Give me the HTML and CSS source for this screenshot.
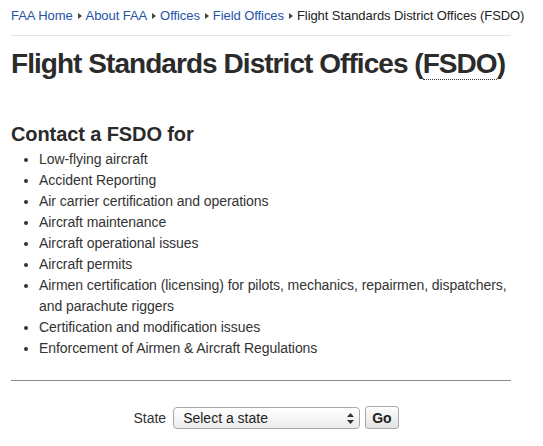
FILE: index.html
```html
<!DOCTYPE html>
<html>
<head>
<meta charset="utf-8">
<link rel="stylesheet" href="styles.css">
</head>
<body>
<div class="page">
  <nav class="crumbs">
    <a href="#">FAA Home</a><span class="sep"></span><a href="#">About FAA</a><span class="sep"></span><a href="#">Offices</a><span class="sep"></span><a href="#">Field Offices</a><span class="sep"></span><span class="current">Flight Standards District Offices (FSDO)</span>
  </nav>
  <h1 class="title">Flight Standards District Offices (<abbr class="abbr" title="Flight Standards District Office">FSDO</abbr>)</h1>
  <h2 class="subtitle">Contact a FSDO for</h2>
  <ul class="list">
    <li>Low-flying aircraft</li>
    <li>Accident Reporting</li>
    <li>Air carrier certification and operations</li>
    <li>Aircraft maintenance</li>
    <li>Aircraft operational issues</li>
    <li>Aircraft permits</li>
    <li>Airmen certification (licensing) for pilots, mechanics, repairmen, dispatchers, and parachute riggers</li>
    <li>Certification and modification issues</li>
    <li>Enforcement of Airmen &amp; Aircraft Regulations</li>
  </ul>
  <hr class="rule">
  <form class="finder">
    <label class="label" for="state">State</label>
    <span class="selectwrap">
      <select id="state" class="select"><option>Select a state</option></select>
      <svg class="arrows" width="7" height="11" viewBox="0 0 7 11"><path d="M3.5 0 L7 4 H0 Z M0 7 H7 L3.5 11 Z" fill="#333"/></svg>
    </span>
    <button type="button" class="go">Go</button>
  </form>
</div>
</body>
</html>
```
FILE: styles.css
```css
html, body { margin: 0; padding: 0; background: #fff; }
body { font-family: "Liberation Sans", Arial, Helvetica, sans-serif; color: #333; }
.page { width: 500px; margin-left: 11px; padding-top: 7px; }
.crumbs { font-size: 13px; line-height: 18px; padding-bottom: 10px; border-bottom: 1px solid #e3e3e3; white-space: nowrap; letter-spacing: -0.07px; }
.crumbs a { color: #2353a8; text-decoration: none; }
.crumbs .current { color: #222; }
.sep { display: inline-block; width: 0; height: 0; border-left: 4px solid #444; border-top: 3.5px solid transparent; border-bottom: 3.5px solid transparent; margin: 0 4px 1px 5px; vertical-align: middle; }
.title { font-size: 28px; line-height: 36px; font-weight: bold; color: #2b2b2b; margin: 10px 0 0; letter-spacing: -0.95px; white-space: nowrap; }
.abbr { text-decoration: none; border-bottom: 1px dotted #333; }
.subtitle { font-size: 20px; line-height: 24px; font-weight: bold; color: #2b2b2b; margin: 40px 0 0; letter-spacing: -0.1px; }
.list { margin: 3px 0 0; padding-left: 28px; font-size: 14px; line-height: 21px; letter-spacing: -0.06px; }
.rule { border: 0; border-top: 1px solid #888; height: 0; margin: 21px 0 0; }
.finder { display: flex; justify-content: center; align-items: center; gap: 7px; margin-top: 25px; padding-left: 10px; font-size: 14px; }
.label { color: #333; }
.selectwrap { position: relative; display: inline-block; }
.select { appearance: none; -webkit-appearance: none; width: 187px; height: 22px; border: 1px solid #a9a9a9; border-radius: 4px; background: linear-gradient(#ffffff, #ececec); font-family: inherit; font-size: 14px; color: #222; padding: 0 0 0 9px; margin: 0; }
.arrows { position: absolute; right: 6px; top: 6px; pointer-events: none; }
.go { height: 23px; padding: 0 6px; border: 1px solid #aaa; border-radius: 3px; background: linear-gradient(#fdfdfd, #e2e2e2); font-family: inherit; font-size: 14px; font-weight: bold; color: #222; margin-left: -2px; }
```
